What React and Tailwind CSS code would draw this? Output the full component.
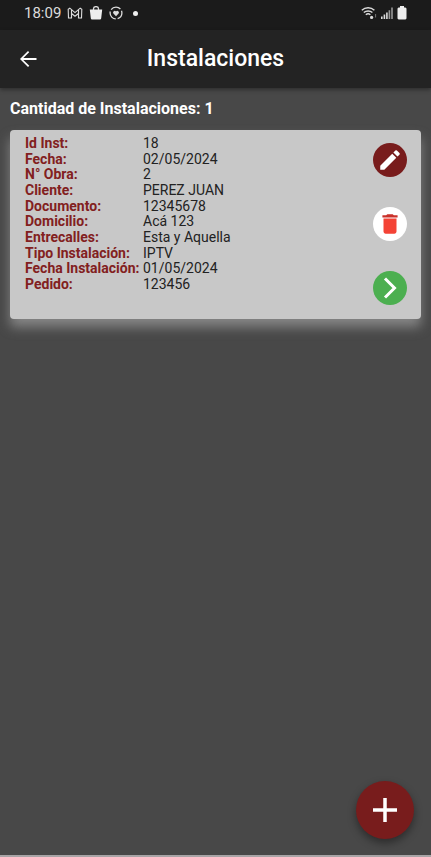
const details = [
  ["Id Inst:", "18"],
  ["Fecha:", "02/05/2024"],
  ["N° Obra:", "2"],
  ["Cliente:", "PEREZ JUAN"],
  ["Documento:", "12345678"],
  ["Domicilio:", "Acá 123"],
  ["Entrecalles:", "Esta y Aquella"],
  ["Tipo Instalación:", "IPTV"],
  ["Fecha Instalación:", "01/05/2024"],
  ["Pedido:", "123456"],
];

function StatusBar() {
  return (
    <div className="flex h-[30px] items-center justify-between bg-[#1b1b1b] px-6 pb-1 text-[#dcdcdc]">
      <div className="flex items-center gap-1.5">
        <span className="text-[15px] leading-5">18:09</span>
        <svg className="h-3.5 w-4" viewBox="0 0 16 14" fill="none" stroke="currentColor" strokeWidth="1.1">
          <path d="M1.200 3.200 1.500 12h3V7.500L8 10.300l3.500-2.800V12h3l.3-8.800-1.600-1L8 6.600 2.800 2.200z" />
          <path d="M4.500 7.500V4M11.500 7.500V4" />
        </svg>
        <svg className="h-3.5 w-3.5" viewBox="0 0 14 14" fill="none">
          <path d="M4.500 4V2.800a2.500 2.200 0 0 1 5 0V4" stroke="currentColor" strokeWidth="1.3" />
          <path d="M.8 3.600h12.400l-1 8.600a1.300 1.300 0 0 1-1.300 1.200H3.100a1.300 1.300 0 0 1-1.300-1.200z" fill="#eeeeee" />
        </svg>
        <svg className="h-3.5 w-3.5" viewBox="0 0 14 14" fill="none">
          <circle cx="7" cy="7" r="5.9" stroke="currentColor" strokeWidth="1.3" strokeDasharray="10.3 2" strokeDashoffset="3" />
          <path d="M7 10.200 4.400 7.500a1.500 1.500 0 0 1 2.600-1.900 1.500 1.500 0 0 1 2.600 1.900z" fill="currentColor" />
        </svg>
        <span className="ml-1 h-[5px] w-[5px] rounded-full bg-[#eeeeee]" />
      </div>
      <div className="flex items-center gap-1">
        <svg className="h-3.5 w-4" viewBox="0 0 16 14" fill="none" stroke="currentColor">
          <path d="M.8 4.200a9.400 9.400 0 0 1 12.600 0M2.800 6.600a6.400 6.400 0 0 1 8.600 0M4.800 8.800a3.600 3.600 0 0 1 4.600 0" strokeWidth="1.4" />
          <circle cx="10.6" cy="11.4" r="1.6" fill="currentColor" stroke="none" />
          <path d="M14.600 8v3.500" stroke="#777777" />
        </svg>
        <svg className="h-3.5 w-3" viewBox="0 0 12 14" fill="currentColor">
          <path d="M0 10.500h1.600V13H0zM2.600 8.500h1.600V13H2.600zM5.100 6.500h1.600V13H5.100z" />
          <path d="M7.600 4.200h1.600V13H7.600zM10.200 1.500h1.600V13h-1.600z" opacity=".65" />
        </svg>
        <svg className="h-3.5 w-2.5" viewBox="0 0 10 14" fill="#eeeeee">
          <path d="M3 0h4v1.500h1.500L9.500 2.500v10l-1 1h-7l-1-1v-10l1-1H3z" />
        </svg>
      </div>
    </div>
  );
}

function Header() {
  return (
    <header className="grid h-[58px] grid-cols-[1fr_auto_1fr] items-center bg-[#232323] px-4 shadow-[0_2px_4px_rgba(0,0,0,0.35)]">
      <button type="button" aria-label="Volver" className="w-6 text-white">
        <svg className="h-6 w-6" viewBox="0 0 24 24" fill="currentColor">
          <path d="M20.500 11.100H7.300l5.900-5.900L12 4 4 12l8 8 1.300-1.200-6-5.900h13.200z" />
        </svg>
      </button>
      <h1 className="text-[23px] leading-7 font-medium text-white">Instalaciones</h1>
    </header>
  );
}

function InstallationCard() {
  return (
    <article className="flex items-start rounded-[4px] bg-[#c8c8c8] pt-[13px] pr-3.5 pb-3.5 pl-[15px] shadow-[0_8px_12px_rgba(160,160,160,0.7)]">
      <div className="flex flex-1 self-stretch">
        <dl className="-mt-[7px] mb-[13px] flex flex-col justify-between text-sm leading-[15px]">
          {details.map(([label, value]) => (
            <div key={label} className="grid grid-cols-[118px_auto]">
              <dt className="font-bold whitespace-nowrap text-[#822020]">{label}</dt>
              <dd className="text-[#222222]">{value}</dd>
            </div>
          ))}
        </dl>
      </div>
      <div className="flex flex-col gap-[30px]">
        <button type="button" aria-label="Editar" className="flex h-[34px] w-[34px] items-center justify-center rounded-full bg-[#781c1c]">
          <svg className="h-[26px] w-[26px]" viewBox="0 0 24 24" fill="#ffffff">
            <path d="M3 17.250V21h3.750L17.810 9.940l-3.750-3.750zM20.710 7.040a1 1 0 0 0 0-1.410l-2.340-2.340a1 1 0 0 0-1.410 0l-1.830 1.830 3.750 3.750z" />
          </svg>
        </button>
        <button type="button" aria-label="Eliminar" className="flex h-[34px] w-[34px] items-center justify-center rounded-full bg-white">
          <svg className="h-[26px] w-[26px]" viewBox="0 0 24 24" fill="#f44336">
            <path d="M6 19c0 1.100.9 2 2 2h8c1.100 0 2-.9 2-2V7H6z" />
            <path d="M19 4h-3.500l-1-1h-5l-1 1H5v2h14z" fill="#c9302a" />
          </svg>
        </button>
        <button type="button" aria-label="Ver detalle" className="flex h-[34px] w-[34px] items-center justify-center rounded-full bg-[#4caf50]">
          <svg className="h-6 w-6" viewBox="0 0 24 24" fill="none" stroke="#ffffff" strokeWidth="3">
            <path d="M7 2.500 16.500 12 7 21.500" />
          </svg>
        </button>
      </div>
    </article>
  );
}

export default function App() {
  return (
    <div className="relative flex min-h-screen flex-col border-b-2 border-[#a8a4a6] bg-[#484848] font-['Roboto',sans-serif]">
      <StatusBar />
      <Header />
      <main className="flex-1 px-2.5">
        <h2 className="py-[11px] text-base leading-5 font-bold text-white">Cantidad de Instalaciones: 1</h2>
        <InstallationCard />
      </main>
      <button
        type="button"
        aria-label="Agregar instalación"
        className="absolute right-[17px] bottom-4 flex h-[58px] w-[58px] items-center justify-center rounded-full bg-[#781c1c] shadow-[0_4px_8px_rgba(0,0,0,0.4)]"
      >
        <svg className="h-6 w-6" viewBox="0 0 24 24" fill="none" stroke="#ffffff" strokeWidth="3.5">
          <path d="M12 0v24M0 12h24" />
        </svg>
      </button>
    </div>
  );
}
